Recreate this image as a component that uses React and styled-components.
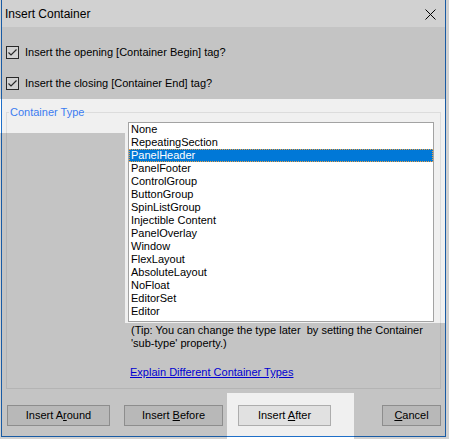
import React from 'react';
import styled, { createGlobalStyle } from 'styled-components';

const Global = createGlobalStyle`
  html, body { margin: 0; padding: 0; background: #ffffff; }
  body {
    width: 449px; height: 439px; overflow: hidden; position: relative;
    font-family: "Liberation Sans", Arial, sans-serif;
  }
`;

const Window = styled.div`
  margin-left: 1px;
  width: 445px;
  height: 437px;
  box-sizing: border-box;
  border: 1px solid #1f6fc8;
  border-top: none;
  display: flex;
  flex-direction: column;
  background: #f0f0f0;
`;

const TitleBar = styled.div`
  height: 27px;
  flex: none;
  background: #ffffff;
  display: flex;
  align-items: center;
  justify-content: space-between;
  padding: 0 9px 0 3px;
  font-size: 12px;
  color: #000;
`;

const CloseIcon = styled.svg`
  display: block;
  margin-top: 2px;
`;

const Body = styled.div`
  flex: 1;
  display: flex;
  flex-direction: column;
  padding: 19px 0 0 0;
  font-size: 11px;
  line-height: 13px;
  color: #000;
`;

const CheckRow = styled.label`
  display: flex;
  align-items: center;
  gap: 6px;
  height: 13px;
  margin-left: 4px;
  margin-bottom: ${p => p.$mb || 0}px;
`;

const Group = styled.div`
  position: relative;
  margin: 22px 0 0 4px;
  width: 435px;
  height: 277px;
  box-sizing: border-box;
  border: 1px solid #dcdcdc;
  padding: 9px 0 0 121px;
  display: flex;
  flex-direction: column;
  align-items: flex-start;
`;

const Legend = styled.span`
  position: absolute;
  top: -7px;
  left: 2px;
  padding: 0 1px;
  background: #f0f0f0;
  color: #3c7cf0;
  font-size: 11px;
  line-height: 13px;
`;

const ListBox = styled.div`
  width: 306px;
  height: 200px;
  box-sizing: border-box;
  border: 1px solid #a3a3a3;
  background: #ffffff;
  display: flex;
  flex-direction: column;
`;

const Item = styled.div`
  height: 13px;
  line-height: 13px;
  padding-left: 2px;
  white-space: nowrap;
  color: ${p => (p.$sel ? '#ffffff' : '#000000')};
  background: ${p => (p.$sel ? '#0078d7' : 'transparent')};
  outline: ${p => (p.$sel ? '1px dotted #f0a040' : 'none')};
  outline-offset: -1px;
`;

const Tip = styled.div`
  margin: 2px 0 0 3px;
  white-space: pre;
`;

const Link = styled.a`
  margin: 16px 0 0 2px;
  color: #0000ff;
  text-decoration: underline;
  cursor: pointer;
`;

const ButtonRow = styled.div`
  display: flex;
  margin-top: 16px;
  padding: 0 4px 0 5px;
`;

const Button = styled.button`
  width: ${p => p.$w}px;
  height: 21px;
  margin-left: ${p => p.$ml || 0}px;
  box-sizing: border-box;
  border: 1px solid #adadad;
  background: #e1e1e1;
  font-family: "Liberation Sans", Arial, sans-serif;
  font-size: 11px;
  line-height: 13px;
  color: #000;
  padding: 0;
  text-align: center;
  white-space: pre;
  u { text-decoration: underline; }
`;

const Dim = styled.svg`
  position: absolute;
  top: 0;
  left: 0;
  pointer-events: none;
`;

const Check = () => (
  <svg width="13" height="13" viewBox="0 0 13 13" style={{ display: 'block', flex: 'none' }}>
    <rect x="0.5" y="0.5" width="12" height="12" fill="#ffffff" stroke="#333333" />
    <polyline points="2.5,6.5 5,9 10.5,3.5" fill="none" stroke="#333333" strokeWidth="1.2" />
  </svg>
);

const items = [
  'None', 'RepeatingSection', 'PanelHeader', 'PanelFooter', 'ControlGroup',
  'ButtonGroup', 'SpinListGroup', 'Injectible Content', 'PanelOverlay', 'Window',
  'FlexLayout', 'AbsoluteLayout', 'NoFloat', 'EditorSet', 'Editor',
];

export default function App() {
  return (
    <>
      <Global />
      <Window>
        <TitleBar>
          <span>Insert Container</span>
          <CloseIcon width="11" height="11" viewBox="0 0 11 11">
            <path d="M0.5 0.5L10.5 10.5M10.5 0.5L0.5 10.5" stroke="#000" strokeWidth="1" />
          </CloseIcon>
        </TitleBar>
        <Body>
          <CheckRow $mb={18}>
            <Check />
            <span>Insert the opening [Container Begin] tag?</span>
          </CheckRow>
          <CheckRow>
            <Check />
            <span>Insert the closing [Container End] tag?</span>
          </CheckRow>
          <Group>
            <Legend>Container Type</Legend>
            <ListBox>
              {items.map(it => (
                <Item key={it} $sel={it === 'PanelHeader'}>{it}</Item>
              ))}
            </ListBox>
            <Tip>
              {'(Tip: You can change the type later  by setting the Container'}
              <br />
              {"'sub-type' property.)"}
            </Tip>
            <Link>Explain Different Container Types</Link>
          </Group>
          <ButtonRow>
            <Button $w={103}>Insert A<u>r</u>ound</Button>
            <Button $w={99} $ml={14}>{'Insert '}<u>B</u>efore</Button>
            <Button $w={93} $ml={15}>{'Insert '}<u>A</u>fter</Button>
            <Button $w={59} $ml={51}><u>C</u>ancel</Button>
          </ButtonRow>
        </Body>
      </Window>
      <Dim width="449" height="439" viewBox="0 0 449 439">
        <path
          fillRule="evenodd"
          fill="rgba(0,0,0,0.18)"
          d="M0 0H449V439H0Z M0 99H445V323H125V133H0Z M227 393H354V439H227Z"
        />
      </Dim>
    </>
  );
}
